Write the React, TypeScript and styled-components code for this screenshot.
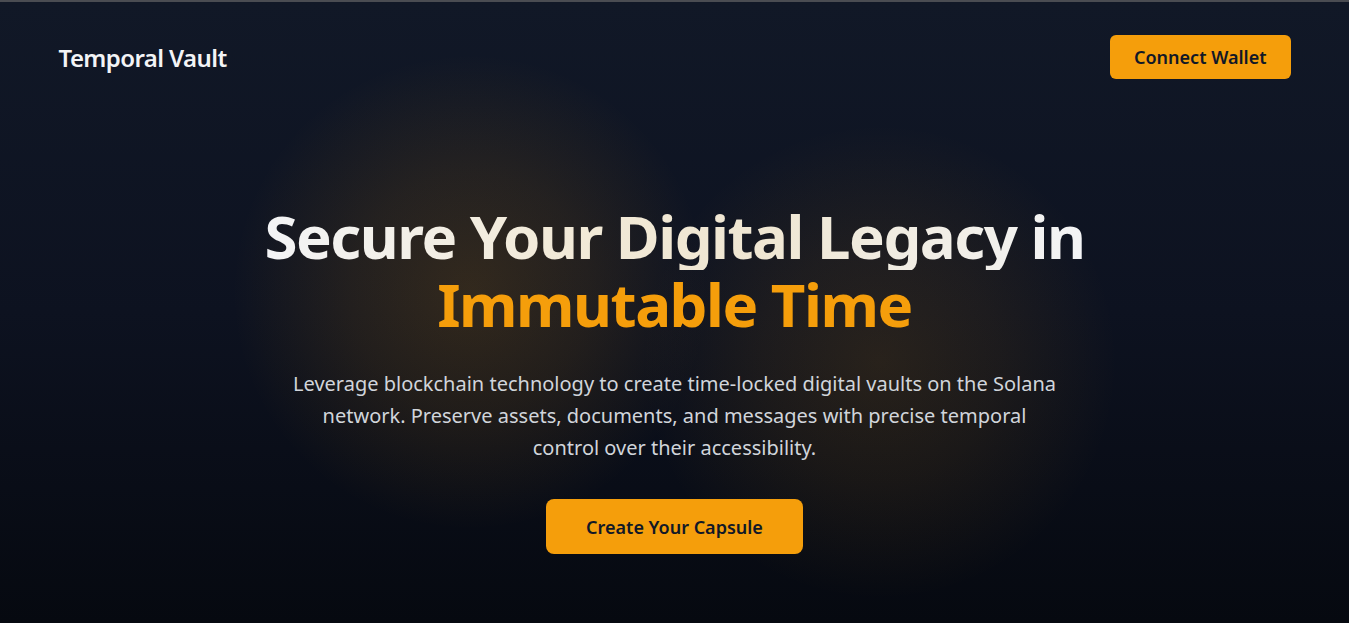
import React from "react";
import styled, { createGlobalStyle } from "styled-components";

const Global = createGlobalStyle`
  html, body { margin: 0; padding: 0; background: #070a12; }
  body { font-family: "Noto Sans", "Open Sans", sans-serif; }
  * { box-sizing: border-box; }
`;

const Page = styled.div`
  position: relative;
  min-height: 623px;
  border-top: 2px solid #4a4c52;
  background: linear-gradient(180deg, #111827 0%, #0d1220 50%, #060910 100%);
  overflow: hidden;
`;

const Glow = styled.div<{ $x: number; $y: number; $size: number; $alpha: number }>`
  position: absolute;
  left: ${(p) => p.$x - p.$size / 2}px;
  top: ${(p) => p.$y - p.$size / 2}px;
  width: ${(p) => p.$size}px;
  height: ${(p) => p.$size}px;
  border-radius: 50%;
  background: radial-gradient(circle, rgba(245, 158, 11, ${(p) => p.$alpha}) 0%, rgba(245, 158, 11, ${(p) => p.$alpha * 0.6}) 35%, rgba(245, 158, 11, 0) 70%);
  pointer-events: none;
`;

const Content = styled.div`
  position: relative;
  z-index: 1;
`;

const Header = styled.header`
  max-width: 1280px;
  margin: 0 auto;
  padding: 33px 24px 0;
  display: flex;
  align-items: center;
  justify-content: space-between;
`;

const Brand = styled.div`
  color: #f3f4f6;
  font-size: 24px;
  font-weight: 600;
  letter-spacing: -0.6px;
`;

const Button = styled.button<{ $large?: boolean }>`
  border: none;
  cursor: pointer;
  background: #f59e0b;
  color: #111827;
  font-family: "Noto Sans", sans-serif;
  font-weight: 600;
  font-size: 18px;
  height: ${(p) => (p.$large ? "55px" : "44px")};
  padding: ${(p) => (p.$large ? "0 40px" : "0 24px")};
  border-radius: ${(p) => (p.$large ? "8px" : "6px")};
`;

const Hero = styled.section`
  display: flex;
  flex-direction: column;
  align-items: center;
  text-align: center;
  padding-top: 123px;
`;

const Title = styled.h1`
  margin: 0;
  font-size: 60px;
  line-height: 68px;
  font-weight: 700;
  letter-spacing: -1.5px;
`;

const TitleLine = styled.span`
  display: block;
  background: linear-gradient(90deg, #f3f4f6 0%, #f2ead8 35%, #efe6d2 60%, #f3f4f6 100%);
  -webkit-background-clip: text;
  background-clip: text;
  color: transparent;
`;

const Accent = styled.span`
  display: block;
  color: #f59e0b;
`;

const Lead = styled.p`
  margin: 30px 0 0;
  max-width: 768px;
  font-size: 20px;
  line-height: 32px;
  color: #d1d5db;
`;

const Actions = styled.div`
  margin-top: 35px;
`;

export default function App() {
  return (
    <>
      <Global />
      <Page>
        <Glow $x={470} $y={290} $size={480} $alpha={0.16} />
        <Glow $x={880} $y={360} $size={480} $alpha={0.12} />
        <Content>
          <Header>
            <Brand>Temporal Vault</Brand>
            <Button>Connect Wallet</Button>
          </Header>
          <Hero>
            <Title>
              <TitleLine>Secure Your Digital Legacy in</TitleLine>
              <Accent>Immutable Time</Accent>
            </Title>
            <Lead>
              Leverage blockchain technology to create time-locked digital vaults on the Solana
              network. Preserve assets, documents, and messages with precise temporal control over
              their accessibility.
            </Lead>
            <Actions>
              <Button $large>Create Your Capsule</Button>
            </Actions>
          </Hero>
        </Content>
      </Page>
    </>
  );
}
